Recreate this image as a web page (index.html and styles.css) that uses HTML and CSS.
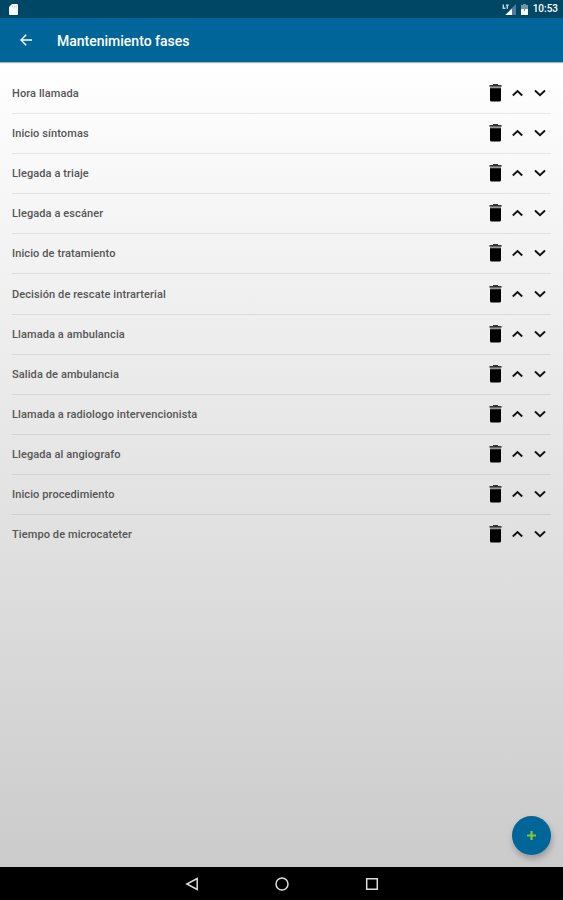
FILE: index.html
```html
<!DOCTYPE html>
<html lang="es">
<head>
    <meta charset="UTF-8">
    <meta name="viewport" content="width=device-width, initial-scale=1.0">
    <title>Mantenimiento fases</title>
    <link rel="stylesheet" href="styles.css">
</head>
<body>
    <div class="screen">
        <div class="status-bar">
            <svg class="sd" width="9" height="11" viewBox="0 0 9 11"><path d="M3 0h5q1 0 1 1v9q0 1-1 1H1q-1 0-1-1V3z" fill="#fff"/><path d="M3.500 1.500v2M5.300 1.500v2M7.100 1.500v2" stroke="#9db8c6" stroke-width=".8"/></svg>
            <div class="status-right">
                <svg width="14" height="11" viewBox="0 0 14 11"><path d="M14 0v11H3z" fill="#4d7f9b"/><path d="M10 4.500V11H3.500z" fill="#fff"/><path d="M1.300.5v3.700h2.200M3.800 1.100h3M5.300 1v3.700" fill="none" stroke="#c5d5de" stroke-width="1.400"/></svg>
                <svg class="battery" width="7" height="11" viewBox="0 0 7 11"><path d="M2 0h3v1h2v5H0V1h2z" fill="#6f95aa"/><path d="M0 5h7v6H0z" fill="#fff"/><path d="M3.500 3v4" stroke="#6f95aa"/></svg>
                <span class="clock">10:53</span>
            </div>
        </div>
        <header class="toolbar">
            <svg class="back" width="12" height="12" viewBox="0 0 12 12"><path d="M6.200.8L1 6l5.200 5.200M1 6h11" fill="none" stroke="#fff" stroke-width="1.500"/></svg>
            <h1>Mantenimiento fases</h1>
        </header>
        <main class="content">
            <ul class="phases" id="phases"></ul>
            <button class="fab" aria-label="Añadir fase">
                <svg width="9" height="9" viewBox="0 0 9 9"><path d="M4.500 0v9M0 4.500h9" stroke="#7fc832" stroke-width="2.200"/></svg>
            </button>
        </main>
        <nav class="nav-bar">
            <svg width="14" height="14" viewBox="0 0 14 14"><path d="M12.200 1.500v11L1.800 7z"/></svg>
            <svg width="14" height="14" viewBox="0 0 14 14"><circle cx="7" cy="7" r="6"/></svg>
            <svg width="14" height="14" viewBox="0 0 14 14"><path d="M1.700 1.700h10.600v10.600H1.700z"/></svg>
        </nav>
    </div>
    <script src="app.js"></script>
</body>
</html>
```

FILE: styles.css
```css
* {
    box-sizing: border-box;
}
body {
    margin: 0;
    font-family: Roboto, "Liberation Sans", sans-serif;
}
svg {
    display: block;
}
.screen {
    display: flex;
    flex-direction: column;
    height: 900px;
    overflow: hidden;
}
.status-bar {
    display: flex;
    justify-content: space-between;
    align-items: center;
    height: 18px;
    padding: 0 5px 0 9px;
    background: #004766;
    color: #fff;
}
.status-right {
    display: flex;
    align-items: center;
}
.battery {
    margin: 0 5px;
}
.clock {
    font-size: 10px;
    font-weight: 500;
    line-height: 18px;
}
.toolbar {
    display: flex;
    align-items: center;
    height: 44px;
    padding-left: 20px;
    background: #006699;
    box-shadow: 0 1px 1px rgba(0, 0, 0, 0.3);
    z-index: 1;
}
.toolbar h1 {
    margin: 2px 0 0 25px;
    color: #fff;
    font-size: 14px;
    font-weight: 500;
}
.content {
    position: relative;
    flex: 1;
    padding: 12px 12px 0;
    background: linear-gradient(#fff, #cbcbcb);
}
.phases {
    margin: 0;
    padding: 0;
    list-style: none;
}
.phase {
    display: flex;
    align-items: center;
    height: 40.1px;
    border-bottom: 1px solid rgba(0, 0, 0, 0.08);
}
.phase svg {
    margin-top: -1px;
}
.phase:last-child {
    border-bottom-color: transparent;
}
.name {
    flex: 1;
    color: #555;
    font-size: 11px;
    font-weight: 500;
    letter-spacing: 0.1px;
}
.phase .up {
    margin: -1px 11px 0 10px;
}
.phase .down {
    margin-right: 5px;
}
.fab {
    position: absolute;
    right: 12px;
    bottom: 12px;
    display: flex;
    align-items: center;
    justify-content: center;
    width: 39px;
    height: 39px;
    padding: 0;
    border: none;
    border-radius: 50%;
    background: #006699;
    box-shadow: 1px 4px 6px rgba(0, 0, 0, 0.25);
}
.nav-bar {
    display: flex;
    justify-content: center;
    align-items: center;
    gap: 76px;
    height: 33px;
    background: #000;
}
.nav-bar svg {
    fill: none;
    stroke: #ddd;
    stroke-width: 1.5;
}
```

FILE: app.js
```javascript
const phases = [
    'Hora llamada',
    'Inicio síntomas',
    'Llegada a triaje',
    'Llegada a escáner',
    'Inicio de tratamiento',
    'Decisión de rescate intrarterial',
    'Llamada a ambulancia',
    'Salida de ambulancia',
    'Llamada a radiologo intervencionista',
    'Llegada al angiografo',
    'Inicio procedimiento',
    'Tiempo de microcateter'
];

const list = document.getElementById('phases');

phases.forEach(name => {
    const item = document.createElement('li');
    item.className = 'phase';
    item.innerHTML = `
        <span class="name">${name}</span>
        <svg class="trash" width="13" height="18" viewBox="0 0 13 18">
            <path d="M4 0h5v1h3.500v1.800H.5V1H4z" fill="#333"/>
            <path d="M1 2.800h11v2H1z" fill="#999"/>
            <path d="M1 4.200h11V16q0 1.500-1.500 1.500h-8Q1 17.500 1 16z"/>
        </svg>
        <svg class="up" width="11" height="8" viewBox="0 0 11 8"><path d="M.8 6.500l4.700-4.500 4.700 4.500" fill="none" stroke="#111" stroke-width="1.900"/></svg>
        <svg class="down" width="12" height="8" viewBox="0 0 12 8"><path d="M1 1.500l5 4.800 5-4.800" fill="none" stroke="#111" stroke-width="1.900"/></svg>
    `;
    list.appendChild(item);
});
```
